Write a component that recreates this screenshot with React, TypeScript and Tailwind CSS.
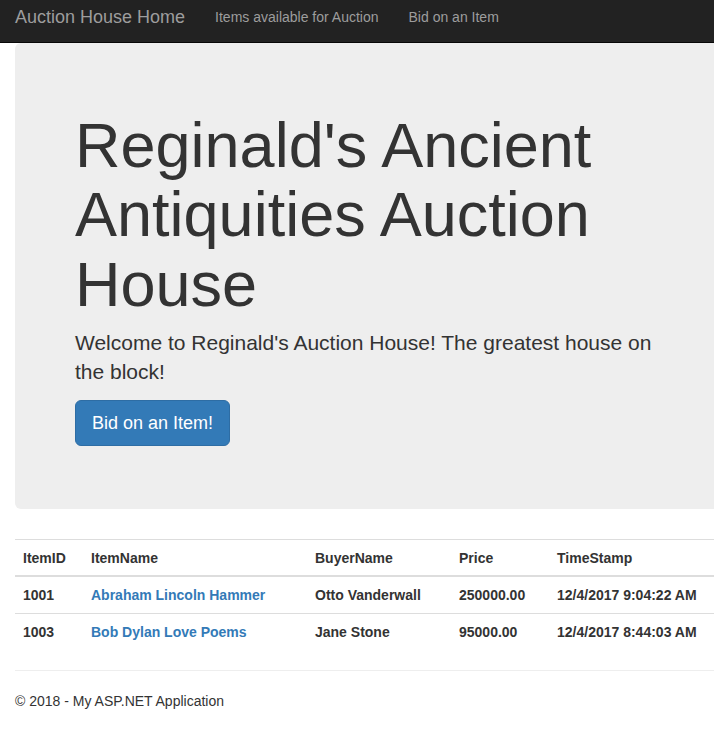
import React from "react";

const rows = [
  { id: "1001", name: "Abraham Lincoln Hammer", buyer: "Otto Vanderwall", price: "250000.00", time: "12/4/2017 9:04:22 AM" },
  { id: "1003", name: "Bob Dylan Love Poems", buyer: "Jane Stone", price: "95000.00", time: "12/4/2017 8:44:03 AM" },
];

const App: React.FC = () => {
  return (
    <div className="w-[714px] min-h-[733px] overflow-hidden bg-white text-[14px] leading-[20px] text-[#333] font-['Liberation_Sans',Arial,sans-serif]">
      {/* NAVBAR */}
      <nav className="h-[43px] bg-[#222] border-b border-[#080808]">
        <div className="flex items-start pt-[7px] pl-[15px]">
          <a className="text-[18px] leading-[20px] text-[#9d9d9d] pr-[15px]">Auction House Home</a>
          <a className="text-[14px] leading-[20px] text-[#9d9d9d] px-[15px]">Items available for Auction</a>
          <a className="text-[14px] leading-[20px] text-[#9d9d9d] px-[15px]">Bid on an Item</a>
        </div>
      </nav>

      {/* BODY */}
      <div className="w-[750px] px-[15px]">
        <div className="bg-[#eee] rounded-[6px] px-[60px] pt-[48px] pb-[48px] mb-[30px]">
          <h1 className="mt-[20px] mb-[9px] text-[63px] leading-[1.1] font-normal">
            Reginald's Ancient Antiquities Auction House
          </h1>
          <p className="text-[21px] leading-[29px] mb-[14px]">
            Welcome to Reginald's Auction House! The greatest house on the block!
          </p>
          <p className="mb-[15px] h-[46px]">
            <a className="inline-block bg-[#337ab7] border border-[#2e6da4] rounded-[6px] text-white text-[18px] leading-[24px] px-[16px] py-[10px]">
              Bid on an Item!
            </a>
          </p>
        </div>

        <table className="w-full border-collapse font-bold mb-[20px]">
          <thead>
            <tr className="text-left">
              <th className="w-[68px] px-[8px] pt-[8px] pb-[7px] border-t border-[#ddd] border-b-2 text-left">ItemID</th>
              <th className="w-[224px] px-[8px] pt-[8px] pb-[7px] border-t border-[#ddd] border-b-2 text-left">ItemName</th>
              <th className="w-[144px] px-[8px] pt-[8px] pb-[7px] border-t border-[#ddd] border-b-2 text-left">BuyerName</th>
              <th className="w-[98px] px-[8px] pt-[8px] pb-[7px] border-t border-[#ddd] border-b-2 text-left">Price</th>
              <th className="px-[8px] pt-[8px] pb-[7px] border-t border-[#ddd] border-b-2 text-left">TimeStamp</th>
            </tr>
          </thead>
          <tbody>
            {rows.map((r) => (
              <tr key={r.id}>
                <td className="px-[8px] py-[8px] border-t border-[#ddd]">{r.id}</td>
                <td className="px-[8px] py-[8px] border-t border-[#ddd]">
                  <a className="text-[#337ab7]">{r.name}</a>
                </td>
                <td className="px-[8px] py-[8px] border-t border-[#ddd]">{r.buyer}</td>
                <td className="px-[8px] py-[8px] border-t border-[#ddd]">{r.price}</td>
                <td className="px-[8px] py-[8px] border-t border-[#ddd]">{r.time}</td>
              </tr>
            ))}
          </tbody>
        </table>

        <hr className="mt-[20px] mb-[20px] border-0 border-t border-[#eee]" />
        <footer>
          <p className="mb-[10px]">© 2018 - My ASP.NET Application</p>
        </footer>
      </div>
    </div>
  );
};

export default App;
